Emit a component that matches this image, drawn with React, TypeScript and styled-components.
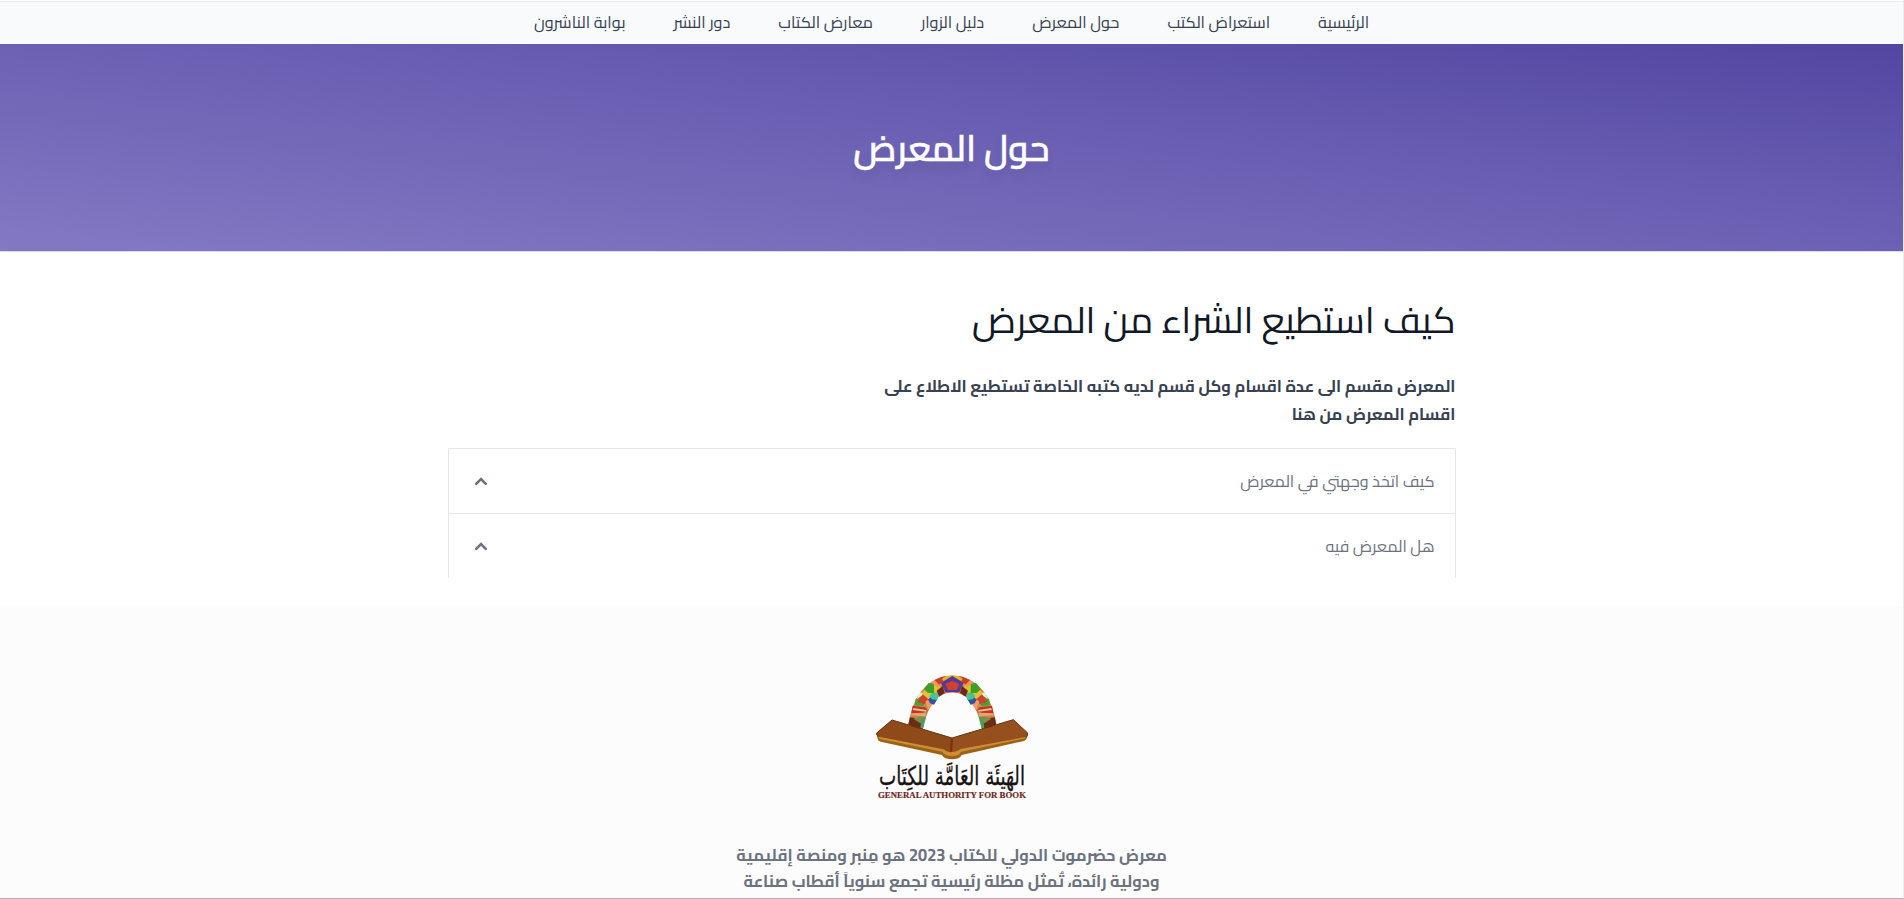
import React from 'react';
import styled, { createGlobalStyle } from 'styled-components';

const GlobalStyle = createGlobalStyle`
  *, *::before, *::after { box-sizing: border-box; }
  body { margin: 0; background: #fff; overflow: hidden; font-family: Cairo, "Noto Sans", sans-serif; }
  h1, h2, p, ul { margin: 0; padding: 0; }
`;

const Page = styled.div`
  height: 899px;
  direction: rtl;
  display: flex;
  flex-direction: column;
  overflow: hidden;
  border-right: 1px solid #ececef;
  border-bottom: 1px solid #aeb1b8;
`;

const Nav = styled.nav`
  flex: none;
  height: 44px;
  border-top: 1px solid #fff;
  background: #f8fafc;
  box-shadow: inset 0 1px 0 #e9edf1;
`;

const NavList = styled.ul`
  height: 41px;
  display: flex;
  justify-content: center;
  align-items: center;
  gap: 48px;
  list-style: none;
  font-size: 16.25px;
  line-height: 24px;
  color: #374151;
`;

const NavItem = styled.li`
  white-space: nowrap;
`;

const Hero = styled.header`
  flex: none;
  height: 208px;
  display: flex;
  align-items: center;
  justify-content: center;
  padding-top: 1px;
  border-bottom: 1px solid #ddd9f0;
  background: linear-gradient(to bottom left, #5246a1 0%, #665bb0 37%, #8379c3 100%);
`;

const HeroTitle = styled.h1`
  font-size: 36px;
  line-height: 40px;
  font-weight: 600;
  color: #fff;
  -webkit-text-stroke: 0.4px #fff;
  text-shadow: 0 8px 8px rgba(0, 0, 0, 0.08);
`;

const Main = styled.main`
  flex: none;
  width: 1008px;
  height: 354px;
  margin: 0 auto;
  padding-top: 45px;
`;

const Heading = styled.h2`
  font-size: 36.9px;
  line-height: 45px;
  font-weight: 400;
  color: #111827;
`;

const Intro = styled.p`
  width: 585px;
  margin: 30px 0 20px;
  font-size: 16.4px;
  line-height: 28px;
  font-weight: 700;
  color: #374151;
`;

const Accordion = styled.div`
  border: 1px solid #e5e7eb;
  border-bottom: 0;
`;

const AccordionRow = styled.div`
  height: 64px;
  display: flex;
  align-items: center;
  justify-content: space-between;
  padding: 0 20px;
  font-size: 16.15px;
  color: #6b7280;

  & + & {
    height: 65px;
    border-top: 1px solid #e5e7eb;
  }
`;

const Chevron = styled.svg`
  width: 24px;
  height: 24px;
`;

const Footer = styled.footer`
  flex: 1;
  display: flex;
  flex-direction: column;
  align-items: center;
  padding-top: 54px;
  background: #fcfcfc;
`;

const Logo = styled.svg`
  flex: none;
  width: 184px;
  height: 150px;
`;

const About = styled.p`
  width: 460px;
  margin-top: 32px;
  font-size: 16.4px;
  line-height: 26px;
  font-weight: 700;
  text-align: center;
  color: #6b7280;
`;

const links = [
  'الرئيسية',
  'استعراض الكتب',
  'حول المعرض',
  'دليل الزوار',
  'معارض الكتاب',
  'دور النشر',
  'بوابة الناشرون',
];

const questions = ['كيف اتخذ وجهتي في المعرض', 'هل المعرض فيه'];

function ArchHalf() {
  return (
    <>
      <path d="M145 193 Q158 110 205 72 Q238 46 277 47 V97 Q238 98 214 136 Q196 166 188 207 Z" fill="#c98a4e" />
      <polygon points="145,193 150,172 186,176 188,207 165,203" fill="#6b2d18" />
      <polygon points="181,207 183,184 203,150 190,204" fill="#4aa05a" />
      <polygon points="160,176 198,162 188,180 181,190" fill="#7c8f4e" />
      <polygon points="152,165 158,152 200,160 196,170" fill="#f4a065" />
      <polygon points="154,160 158,137 196,142 203,152 190,158" fill="#b8382b" />
      <polygon points="158,150 161,144 200,150 198,155" fill="#f0b98e" />
      <polygon points="164,136 167,118 180,106 196,124 190,138" fill="#4aa22e" />
      <polygon points="172,126 187,103 205,118 195,132" fill="#cf4030" />
      <polygon points="170,118 178,98 192,98 184,108" fill="#fbe8c8" />
      <polygon points="196,125 212,112 219,132 205,148" fill="#f79a63" />
      <polygon points="203,116 215,110 232,118 222,134 210,130" fill="#3551a4" />
      <polygon points="186,100 196,88 220,100 206,118" fill="#e0c434" />
      <polygon points="208,108 220,94 238,104 231,120 216,118" fill="#45c496" />
      <polygon points="192,88 205,70 224,68 229,82 222,100 203,98" fill="#3f9e26" />
      <polygon points="222,72 234,68 246,86 236,98 222,98" fill="#dcc42e" />
      <polygon points="212,68 236,54 244,74 232,82 222,74" fill="#f0945c" />
      <polygon points="230,92 248,78 254,98 238,110" fill="#70271b" />
      <polygon points="224,60 246,50 260,48 247,66 238,74" fill="#cc3a28" />
      <polygon points="246,56 258,48 277,46 277,54 252,66" fill="#dcb62e" />
    </>
  );
}

function BookLogo() {
  return (
    <Logo viewBox="0 0 552 450" direction="ltr">
      <ArchHalf />
      <g transform="translate(554 0) scale(-1 1)">
        <ArchHalf />
      </g>
      <polygon points="277,48 311,68 298,97 256,97 243,68" fill="#56389b" />
      <polygon points="277,62 298,72 290,90 264,90 256,72" fill="#cf4030" />
      <path
        d="M50 222 L54 241 L62 245 L246 285 Q252 298 276 298 Q299 298 305 285 L492 243 Q501 240 504 222 L276 250 Z"
        fill="#9a6318"
      />
      <path
        d="M53 226 L58 236 L247 275 Q254 288 276 288 Q297 288 303 275 L495 235 L501 224 L276 260 Z"
        fill="#cf8d35"
      />
      <path d="M96 180 L276 234 L272 277 Q258 275 250 268 L56 230 Q48 226 50 219 Z" fill="#8f4a19" />
      <path d="M460 179 L276 234 L272 277 Q292 275 302 267 L497 231 Q504 228 503 219 Z" fill="#96501d" />
      <path
        d="M56 230 Q48 226 50 219 L96 180 L276 234 L460 179 L503 219 Q504 228 497 231"
        fill="none"
        stroke="#64300f"
        strokeWidth="3"
      />
      <path d="M276 236 L273 275" stroke="#7d2f08" strokeWidth="6" />
      <text
        x="276"
        y="375"
        textAnchor="middle"
        textLength="438"
        lengthAdjust="spacingAndGlyphs"
        fontFamily="'DejaVu Sans', sans-serif"
        fontSize="78"
        fill="#17110f"
        stroke="#17110f"
        strokeWidth="1"
      >
        الهَيئَة العَامَّة للكِتَاب
      </text>
      <text
        x="276"
        y="415"
        textAnchor="middle"
        textLength="444"
        lengthAdjust="spacingAndGlyphs"
        fontFamily="'Liberation Serif', serif"
        fontWeight="700"
        fontSize="25"
        fill="#6f2420"
        stroke="#6f2420"
        strokeWidth="0.5"
      >
        GENERAL AUTHORITY FOR BOOK
      </text>
    </Logo>
  );
}

export default function App() {
  return (
    <>
      <GlobalStyle />
      <Page>
        <Nav>
          <NavList>
            {links.map((label) => (
              <NavItem key={label}>{label}</NavItem>
            ))}
          </NavList>
        </Nav>
        <Hero>
          <HeroTitle>حول المعرض</HeroTitle>
        </Hero>
        <Main>
          <Heading>كيف استطيع الشراء من المعرض</Heading>
          <Intro>
            المعرض مقسم الى عدة اقسام وكل قسم لديه كتبه الخاصة تستطيع الاطلاع على
            <br />
            اقسام المعرض من هنا
          </Intro>
          <Accordion>
            {questions.map((question) => (
              <AccordionRow key={question}>
                {question}
                <Chevron viewBox="0 0 24 24">
                  <path
                    d="M7.2 14.9l4.8-4.8 4.8 4.8"
                    fill="none"
                    stroke="#6b7280"
                    strokeWidth="2.6"
                    strokeLinecap="round"
                  />
                </Chevron>
              </AccordionRow>
            ))}
          </Accordion>
        </Main>
        <Footer>
          <BookLogo />
          <About>
            معرض حضرموت الدولي للكتاب 2023 هو مِنبر ومنصة إقليمية
            <br />
            ودولية رائدة، تُمثل مظلة رئيسية تجمع سنوياً أقطاب صناعة
            <br />
            محلياً وعربياً
          </About>
        </Footer>
      </Page>
    </>
  );
}
